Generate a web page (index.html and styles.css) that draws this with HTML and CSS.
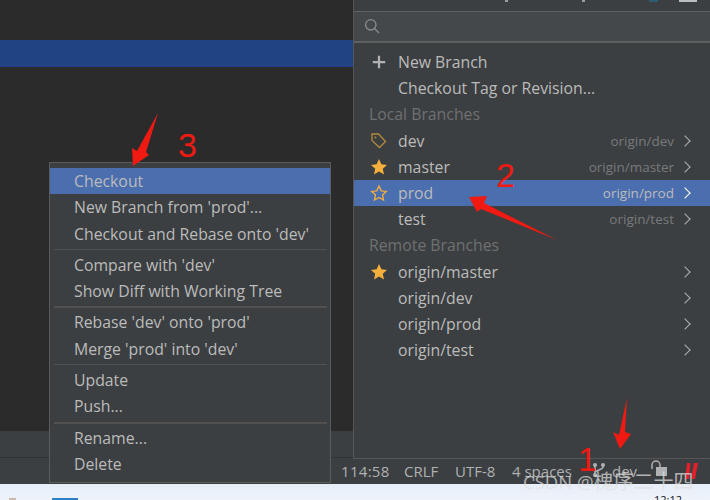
FILE: index.html
```html
<!DOCTYPE html>
<html lang="en">
<head>
<meta charset="utf-8">
<title>Branches</title>
<link rel="stylesheet" href="styles.css">
</head>
<body>
<div class="ide">
  <main class="editor"><div class="selected-line"></div></main>
  <div class="tool-panel"></div>
  <footer class="status">
    <span class="s-pos">114:58</span><span class="s-crlf">CRLF</span><span class="s-enc">UTF-8</span><span class="s-ind">4 spaces</span>
    <svg class="s-git" width="14" height="16" viewBox="0 0 14 16"><g fill="none" stroke="#afb1b3" stroke-width="1.5"><path d="M3 3v10M11 3v2c0 3-8 3-8 6"/></g><g fill="#afb1b3"><circle cx="3" cy="3" r="2"/><circle cx="11" cy="3" r="2"/><circle cx="3" cy="13" r="2"/></g></svg>
    <span class="s-branch">dev</span>
    <svg class="s-lock" width="20" height="20" viewBox="0 0 20 20"><path d="M2 9V5a4 4 0 0 1 8 0v2" fill="none" stroke="#afb1b3" stroke-width="1.5"/><rect x="6" y="7" width="11" height="9" fill="#afb1b3"/></svg>
    <svg class="s-mark" width="14" height="18" viewBox="0 0 14 18"><path d="M3 0h3.500L5 16H1zM10 0h4l-3 16H7z" fill="#e0202a"/></svg>
  </footer>
  <div class="taskbar"><i class="task-tan"></i><i class="task-blue"></i><span class="task-clock">12:12</span></div>
</div>

<section class="branches">
  <div class="peek"><i class="pk pk-a"></i><i class="pk pk-b"></i><i class="pk pk-c"></i><i class="pk pk-d"></i></div>
  <div class="search">
    <svg width="18" height="18" viewBox="0 0 18 18"><circle cx="6.800" cy="6.800" r="5.200" fill="none" stroke="#8a8d8f" stroke-width="1.300"/><path d="M10.500 10.500l4.500 4.500" stroke="#8a8d8f" stroke-width="1.300"/></svg>
  </div>
  <ul class="blist">
    <li class="brow"><svg class="bicon" width="16" height="16" viewBox="0 0 16 16"><path d="M7 2.500h2V7h4.500v2H9v4.500H7V9H2.500V7H7z" fill="#afb1b3"/></svg><span>New Branch</span></li>
    <li class="brow"><span class="bicon"></span><span>Checkout Tag or Revision...</span></li>
    <li class="bhead">Local Branches</li>
    <li class="brow"><svg class="bicon" width="18" height="18" viewBox="0 0 18 18"><path d="M2 2h6.500l7 7.500-6 6-7.500-7z" fill="none" stroke="#b38a3e" stroke-width="1.300"/><circle cx="5.500" cy="5.500" r="1" fill="#b38a3e"/></svg><span>dev</span><span class="track">origin/dev</span><span class="chev"></span></li>
    <li class="brow"><svg class="bicon" width="18" height="18" viewBox="0 0 18 18"><path d="M9 1l2.400 5.300 5.600.6-4.200 3.900 1.200 5.700L9 13.600 4 16.500l1.200-5.700L1 6.900l5.600-.6z" fill="#f4af3d"/></svg><span>master</span><span class="track">origin/master</span><span class="chev"></span></li>
    <li class="brow on"><svg class="bicon" width="18" height="18" viewBox="0 0 18 18"><path d="M9 2l2.200 4.800 5.100.6-3.800 3.500 1 5.100L9 13.400 4.500 16l1-5.100L1.700 7.400l5.100-.6z" fill="none" stroke="#f4af3d" stroke-width="1.300"/></svg><span>prod</span><span class="track">origin/prod</span><span class="chev"></span></li>
    <li class="brow"><span class="bicon"></span><span>test</span><span class="track">origin/test</span><span class="chev"></span></li>
    <li class="bhead">Remote Branches</li>
    <li class="brow"><svg class="bicon" width="18" height="18" viewBox="0 0 18 18"><path d="M9 1l2.400 5.300 5.600.6-4.200 3.900 1.200 5.700L9 13.600 4 16.500l1.200-5.700L1 6.900l5.600-.6z" fill="#f4af3d"/></svg><span>origin/master</span><span class="track"></span><span class="chev"></span></li>
    <li class="brow"><span class="bicon"></span><span>origin/dev</span><span class="track"></span><span class="chev"></span></li>
    <li class="brow"><span class="bicon"></span><span>origin/prod</span><span class="track"></span><span class="chev"></span></li>
    <li class="brow"><span class="bicon"></span><span>origin/test</span><span class="track"></span><span class="chev"></span></li>
  </ul>
</section>

<section class="menu">
  <div class="mrow on">Checkout</div>
  <div class="mrow">New Branch from 'prod'...</div>
  <div class="mrow">Checkout and Rebase onto 'dev'</div>
  <hr class="msep">
  <div class="mrow">Compare with 'dev'</div>
  <div class="mrow">Show Diff with Working Tree</div>
  <hr class="msep msep-b">
  <div class="mrow">Rebase 'dev' onto 'prod'</div>
  <div class="mrow">Merge 'prod' into 'dev'</div>
  <hr class="msep">
  <div class="mrow">Update</div>
  <div class="mrow">Push...</div>
  <hr class="msep msep-b">
  <div class="mrow">Rename...</div>
  <div class="mrow">Delete</div>
</section>

<svg class="marks" width="710" height="500" viewBox="0 0 710 500">
  <g fill="#f01a12">
    <path d="M158 113 L146 152 L149 155 L133 166 L132 148 L137 151z"/>
    <path d="M469 197 L487 196 L484 203 L557 240 L481 209 L477 212z"/>
    <path d="M627 398 L625 432 L631 434 L620 449 L613 432 L619 435z"/>
  </g>
</svg>
<span class="num n3">3</span>
<span class="num n2">2</span>
<span class="num n1">1</span>
<span class="watermark">CSDN @<span class="wm-cjk">槐序二十四</span></span>
</body>
</html>
```
FILE: styles.css
```css
* { box-sizing: border-box; }
html, body { margin: 0; padding: 0; }
body {
  width: 710px; height: 500px; overflow: hidden; position: relative;
  font-family: "Open Sans", "Noto Sans CJK SC", sans-serif;
  background: #2b2b2b;
}
.ide { display: flex; flex-direction: column; height: 500px; }
.editor { height: 431px; background: #2b2b2b; padding-top: 40px; }
.selected-line { height: 27px; background: #214283; }
.tool-panel { height: 27px; background: #3c3f41; border-bottom: 1px solid #323232; }
.status {
  height: 26px; background: #3c3f41; display: flex; align-items: center;
  font-size: 15px; color: #afb1b3; position: relative;
}
.status > * { position: absolute; }
.s-pos { left: 341px; letter-spacing: .3px; } .s-crlf { left: 404px; } .s-enc { left: 455px; } .s-ind { left: 512px; }
.s-git { left: 592px; top: 4px; } .s-branch { left: 612px; }
.s-lock { left: 650px; top: 2px; } .s-mark { left: 684px; top: 5px; }
.taskbar { height: 16px; background: linear-gradient(#e6eef8, #eef3f9); position: relative; }
.task-tan { position: absolute; left: 9px; top: 14px; width: 7px; height: 2px; background: #c9b8a8; }
.task-blue { position: absolute; left: 52px; top: 14px; width: 26px; height: 2px; background: #2f7fc4; }
.task-clock { position: absolute; left: 654px; top: 8px; font-size: 11px; color: #111; }

.branches {
  position: absolute; left: 353px; top: 0; width: 357px; height: 459px;
  background: #3c3f41; border-left: 1px solid #555; border-bottom: 1px solid #555;
  color: #bbbbbb; font-size: 15.800px;
}
.peek { height: 11px; display: flex; position: relative; }
.pk { position: absolute; top: 0; height: 2px; }
.pk-a { left: 151px; width: 3px; background: #9a9c9e; }
.pk-b { left: 228px; width: 3px; background: #9a9c9e; }
.pk-c { left: 295px; width: 9px; background: #2f5a70; }
.pk-d { left: 325px; width: 18px; background: #bbbdbf; }
.search { height: 32px; background: #45484a; border-top: 1px solid #5e6060; border-bottom: 2px solid #5e6060; display: flex; align-items: center; padding-left: 10px; }
.blist { list-style: none; margin: 0; padding: 6px 0 0; }
.brow { height: 26.200px; display: flex; align-items: center; padding: 0 12px 0 16px; }
.bicon { width: 18px; height: 18px; margin-right: 10px; flex: none; }
.bhead { height: 26.200px; line-height: 26px; padding-left: 15px; color: #6e7072; }
.track { margin-left: auto; color: #787a7c; font-size: 13.500px; margin-right: 7px; }
.chev { width: 8px; height: 8px; border-top: 1.500px solid #afb1b3; border-right: 1.500px solid #afb1b3; transform: rotate(45deg); margin-right: 9px; }
.on { background: #4b6eaf; }
.on .chev { border-color: #fff; }
.on .track { color: #bbb; }

.menu {
  position: absolute; left: 49px; top: 162px; width: 282px; height: 321px;
  background: #3c3f41; border: 1px solid #595b5d; padding-top: 5px;
  color: #bbbbbb; font-size: 15.800px;
}
.mrow { height: 26.300px; line-height: 26.500px; padding-left: 24px; }
.msep { border: 0; height: 1px; background: #515151; margin: 2px 3px 2px 4px; }
.msep-b { height: 2px; margin-bottom: 1px; }

.marks { position: absolute; left: 0; top: 0; }
.num { position: absolute; color: #f01a12; font-family: "Liberation Sans", sans-serif; font-size: 34px; line-height: 1; }
.n3 { left: 178px; top: 128px; } .n2 { left: 496px; top: 158px; } .n1 { left: 578px; top: 442px; }
.watermark { position: absolute; left: 523px; top: 466px; font-size: 18.500px; color: rgba(225,225,225,.72); white-space: nowrap; }
.wm-cjk { font-size: 20px; }
```
